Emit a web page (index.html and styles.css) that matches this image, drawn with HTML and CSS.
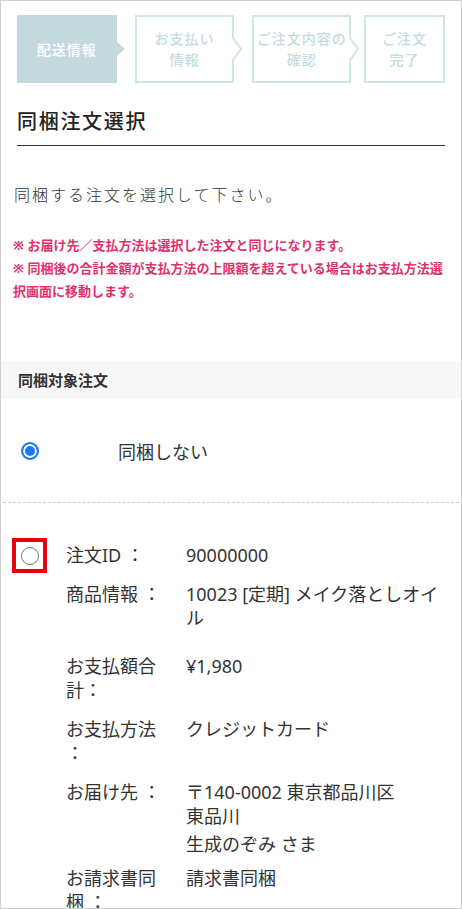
FILE: index.html
```html
<!DOCTYPE html>
<html lang="ja">
<head>
    <meta charset="UTF-8">
    <meta name="viewport" content="width=device-width, initial-scale=1.0">
    <title>同梱注文選択</title>
    <link rel="stylesheet" href="styles.css">
</head>
<body>
    <div class="frame">
        <!-- ステップ表示 -->
        <ol class="steps">
            <li class="step current"><span>配送情報</span></li>
            <li class="step"><span>お支払い<br>情報</span></li>
            <li class="step"><span>ご注文内容の<br>確認</span></li>
            <li class="step last"><span>ご注文<br>完了</span></li>
        </ol>

        <h1 class="page-title">同梱注文選択</h1>

        <p class="lead">同梱する注文を選択して下さい。</p>

        <div class="notes">
            <p>※ お届け先／支払方法は選択した注文と同じになります。</p>
            <p>※ 同梱後の合計金額が支払方法の上限額を超えている場合はお支払方法選択画面に移動します。</p>
        </div>

        <!-- 同梱対象注文 -->
        <h2 class="section-head">同梱対象注文</h2>

        <label class="choice none">
            <input type="radio" name="bundle" value="none" checked>
            <span class="choice-text">同梱しない</span>
        </label>

        <div class="order">
            <span class="radio-box">
                <input type="radio" name="bundle" value="90000000">
            </span>
            <dl class="order-info">
                <div class="row">
                    <dt>注文ID ：</dt>
                    <dd>90000000</dd>
                </div>
                <div class="row product">
                    <dt>商品情報 ：</dt>
                    <dd>10023 [定期] メイク落としオイル</dd>
                </div>
                <div class="row">
                    <dt>お支払額合計：</dt>
                    <dd>¥1,980</dd>
                </div>
                <div class="row">
                    <dt>お支払方法 ：</dt>
                    <dd>クレジットカード</dd>
                </div>
                <div class="row address">
                    <dt>お届け先 ：</dt>
                    <dd>
                        <p>〒140-0002 東京都品川区<br>東品川</p>
                        <p class="name">生成のぞみ さま</p>
                    </dd>
                </div>
                <div class="row">
                    <dt>お請求書同梱 ：</dt>
                    <dd>請求書同梱</dd>
                </div>
            </dl>
        </div>
    </div>
</body>
</html>
```

FILE: styles.css
```css
* {
    margin: 0;
    padding: 0;
    box-sizing: border-box;
}

body {
    font-family: "Noto Sans", "Noto Sans CJK JP", sans-serif;
    background: #fff;
    color: #333;
}

.frame {
    width: 462px;
    height: 909px;
    border: 1px solid #cfcfcf;
    overflow: hidden;
}

/* ステップ */
.steps {
    list-style: none;
    display: flex;
    margin: 14px 16px 0;
    height: 68px;
}

.step {
    position: relative;
    width: 100px;
    height: 68px;
    margin-right: 18px;
    border: 2px solid #d3e4e8;
    color: #c6dbe0;
    font-size: 14px;
    font-weight: 500;
    letter-spacing: 1px;
    line-height: 21px;
    display: flex;
    align-items: center;
    justify-content: center;
    text-align: center;
}

.step:nth-child(3) {
    width: 99px;
    margin-right: 13px;
}

.step.last {
    width: 81px;
    margin-right: 0;
}

.step::after {
    content: "";
    position: absolute;
    right: -11px;
    top: 50%;
    width: 11px;
    height: 26px;
    margin-top: -13px;
    background: url("data:image/svg+xml,%3Csvg xmlns='http://www.w3.org/2000/svg' width='11' height='26'%3E%3Cpath d='M0 0 L9 13 L0 26 Z' fill='%23fff'/%3E%3Cpath d='M0 0.5 L9 13 L0 25.5' fill='none' stroke='%23d3e4e8' stroke-width='2'/%3E%3C/svg%3E") no-repeat;
}

.step.last::after {
    display: none;
}

.step.current {
    background: #c4d9de;
    border-color: #c4d9de;
    color: #fff;
}

.step.current::after {
    right: -10px;
    width: 9px;
    height: 16px;
    margin-top: -8px;
    background: url("data:image/svg+xml,%3Csvg xmlns='http://www.w3.org/2000/svg' width='9' height='16'%3E%3Cpath d='M0 0 L9 8 L0 16 Z' fill='%23c4d9de'/%3E%3C/svg%3E") no-repeat;
}

/* タイトル */
.page-title {
    margin: 25px 16px 0;
    padding-bottom: 9px;
    border-bottom: 1px solid #2f3338;
    font-size: 20px;
    font-weight: 500;
    line-height: 28px;
    letter-spacing: 1.7px;
    color: #222;
}

.lead {
    margin: 37px 0 0 13px;
    font-size: 16px;
    line-height: 24px;
    letter-spacing: 2px;
    font-weight: 300;
    color: #333;
}

.notes {
    margin-top: 27px;
    padding: 0 9px 0 12px;
    color: #e3306c;
    font-size: 13px;
    font-weight: 700;
    line-height: 23px;
}

/* 同梱対象注文 */
.section-head {
    margin-top: 58px;
    height: 38px;
    padding-left: 17px;
    background: #f7f7f7;
    font-size: 15px;
    font-weight: 700;
    line-height: 38px;
    color: #333;
}

.choice {
    display: flex;
    align-items: center;
    height: 104px;
    margin: 0 2px;
    padding-left: 18px;
    border-bottom: 1px dashed #cfcfcf;
}

.choice-text {
    margin-left: 79px;
    font-size: 18px;
    color: #333;
}

input[type="radio"] {
    appearance: none;
    -webkit-appearance: none;
    width: 18px;
    height: 18px;
    border: 1px solid #7a7a7a;
    border-radius: 50%;
    background: #fff;
    flex: none;
}

input[type="radio"]:checked {
    border: 2px solid #1a7cf5;
    background: #1a7cf5;
    box-shadow: inset 0 0 0 2px #fff;
}

.order {
    display: flex;
    align-items: flex-start;
    padding: 40px 12px 0 11px;
}

.radio-box {
    width: 35px;
    height: 35px;
    margin-top: -5px;
    border: 4px solid #e8000b;
    display: flex;
    align-items: center;
    justify-content: center;
    flex: none;
}

.order-info {
    margin-left: 19px;
    font-size: 18px;
    line-height: 24px;
    color: #333;
}

.row {
    display: flex;
    margin-bottom: 15px;
}

.row dt {
    width: 100px;
    flex: none;
}

.row dd {
    margin-left: 20px;
}

.row.product dd {
    padding-bottom: 9px;
}

.row.address {
    margin-bottom: 10px;
}

.row.address .name {
    margin-top: 4px;
}
```
